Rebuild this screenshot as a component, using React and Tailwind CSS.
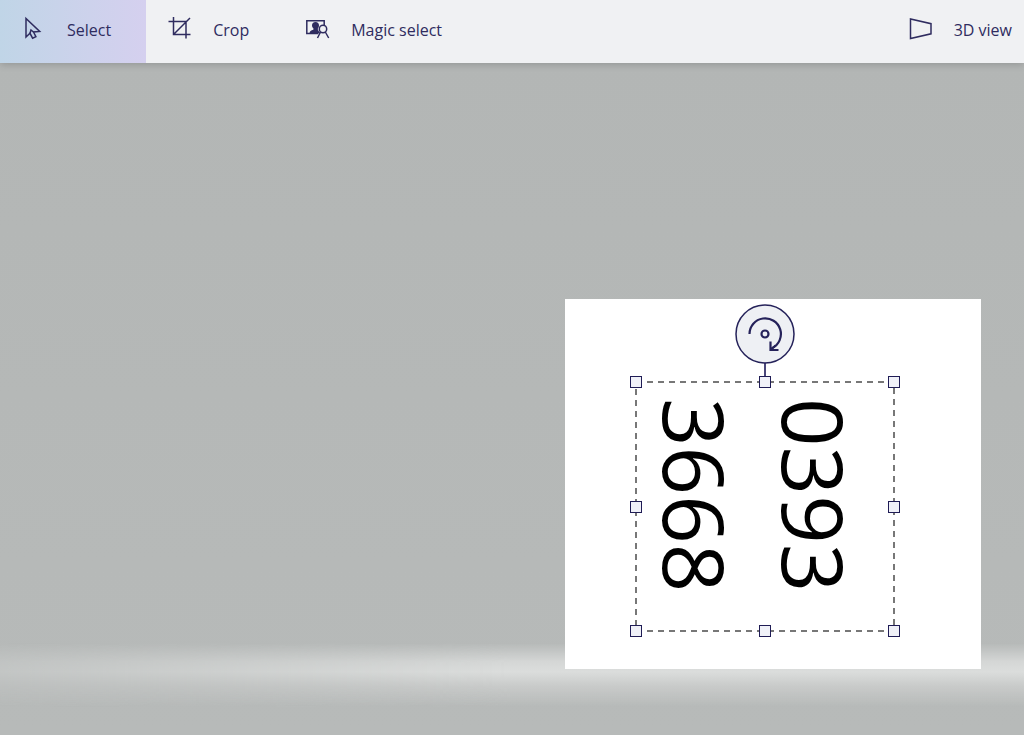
import React from "react";
import clsx from "clsx";

const iconProps = {
	viewBox: "0 0 24 24",
	fill: "none",
	stroke: "currentColor",
	strokeWidth: 1.5,
	className: "w-6 h-6 shrink-0 mb-1",
	"aria-hidden": true,
};

const SelectIcon = () => (
	<svg {...iconProps}>
		<path d="M4 2.5V21l4-3.700 2.600 4.900 3.300-1.600-2.400-4.600 6.200-.6z" />
		<path d="M8 17.300l1-3.300 2.500 2" />
	</svg>
);

const CropIcon = () => (
	<svg {...iconProps}>
		<path d="M0.500 5.500h17.500v17M5.500 1v17.500H22.500M5.500 18.500L22 2" />
	</svg>
);

const MagicSelectIcon = () => (
	<svg {...iconProps}>
		<path d="M12 17.500H.8V4.800h17.400v5" />
		<path
			d="M9.500 6c2.200 0 3.500 1.500 3.500 3.500 0 1.200-.4 2-1.100 2.800v1.700l2.600 3.500H3.500c0-2.200 1.500-3.200 3.900-3.800v-1.500c-.9-.8-1.400-1.700-1.400-3C6 7.400 7.300 6 9.500 6z"
			fill="currentColor"
			stroke="none"
		/>
		<circle cx="17" cy="13" r="3.700" fill="#f0f1f3" />
		<path d="M14.500 16l-3 6M19.300 16l3.400 6" />
	</svg>
);

const ViewIcon = () => (
	<svg {...iconProps}>
		<path d="M1.500 3v19.500l20.500-4.700V7.700z" />
	</svg>
);

const ToolButton = ({ icon, label, active = false, last = false }) => {
	return (
		<button
			type="button"
			aria-pressed={active}
			className={clsx(
				"flex items-center gap-[21px] pl-[22px] pb-[3px] whitespace-nowrap",
				last ? "pr-3" : "pr-[35px]",
				active && "bg-linear-to-r from-[#c0d5e7] to-[#d5d0ef]"
			)}
		>
			{icon}
			{label}
		</button>
	);
};

const handles = [
	{ name: "top left", place: "left-0 top-0" },
	{ name: "top", place: "left-1/2 top-0" },
	{ name: "top right", place: "left-full top-0" },
	{ name: "left", place: "left-0 top-1/2" },
	{ name: "right", place: "left-full top-1/2" },
	{ name: "bottom left", place: "left-0 top-full" },
	{ name: "bottom", place: "left-1/2 top-full" },
	{ name: "bottom right", place: "left-full top-full" },
];

const Selection = ({ lines = [] }) => {
	return (
		<div className="relative w-[258px] h-[249px]">
			<svg className="absolute inset-0 w-full h-full overflow-visible" aria-hidden>
				<rect
					width="100%"
					height="100%"
					fill="none"
					stroke="#777777"
					strokeWidth="2"
					strokeDasharray="6 5"
				/>
			</svg>
			<p className="h-full pt-4 [writing-mode:vertical-rl] font-['Open_Sans','Noto_Sans',sans-serif] text-[85px] leading-[119px] text-black">
				{lines.map((line) => (
					<span key={line} className="block">
						{line}
					</span>
				))}
			</p>
			<div className="absolute left-1/2 -top-5 h-5 w-0.5 -translate-x-1/2 bg-[#4a477a]" />
			<button
				type="button"
				aria-label="Rotate"
				className="absolute left-1/2 -top-[78px] -translate-x-1/2 w-[60px] h-[60px] text-[#25225a]"
			>
				<svg viewBox="0 0 60 60" fill="none" stroke="currentColor" strokeWidth="2.2" aria-hidden>
					<circle cx="30" cy="30" r="29" fill="#eef0f4" strokeWidth="1.500" />
					<path d="M14.500 30a15.700 15.700 0 1 1 22.500 14.200" />
					<path d="M35.500 37.500v8.500h8M36 45.500l4.500-4" />
					<circle cx="30" cy="30" r="3.500" />
				</svg>
			</button>
			{handles.map((handle) => (
				<button
					key={handle.name}
					type="button"
					aria-label={`Resize ${handle.name}`}
					className={clsx(
						"absolute w-3 h-3 -translate-x-1/2 -translate-y-1/2 border border-[#1f1c55] bg-[#f0f1f8]",
						handle.place
					)}
				/>
			))}
		</div>
	);
};

const App = () => {
	return (
		<div className="min-h-screen flex flex-col font-['Open_Sans','Noto_Sans',sans-serif]">
			<header className="relative z-10 flex justify-between h-[63px] bg-[#f0f1f3] text-base text-[#2f2c5f] shadow-[0_1px_8px_rgba(0,0,0,0.2)]">
				<div className="flex">
					<ToolButton icon={<SelectIcon />} label="Select" active />
					<ToolButton icon={<CropIcon />} label="Crop" />
					<ToolButton icon={<MagicSelectIcon />} label="Magic select" />
				</div>
				<ToolButton icon={<ViewIcon />} label="3D view" last />
			</header>
			<main className="relative flex-1 flex items-end justify-end pr-[43px] pb-[66px] bg-linear-to-b from-[#b3b6b5] to-[#b7bab9]">
				{/* lit edge where the floor meets the backdrop */}
				<div className="absolute inset-x-0 bottom-7 h-16 bg-[linear-gradient(to_bottom,transparent,#d5d7d6_30%,#dbdddc_45%,#c8cac9_68%,transparent)] mask-[linear-gradient(to_right,rgba(0,0,0,0.35),black_50%)]" />
				<section className="relative w-[416px] h-[370px] pl-[71px] pt-[83px] bg-white">
					<Selection lines={["0393", "3668"]} />
				</section>
			</main>
		</div>
	);
};

export default App;
